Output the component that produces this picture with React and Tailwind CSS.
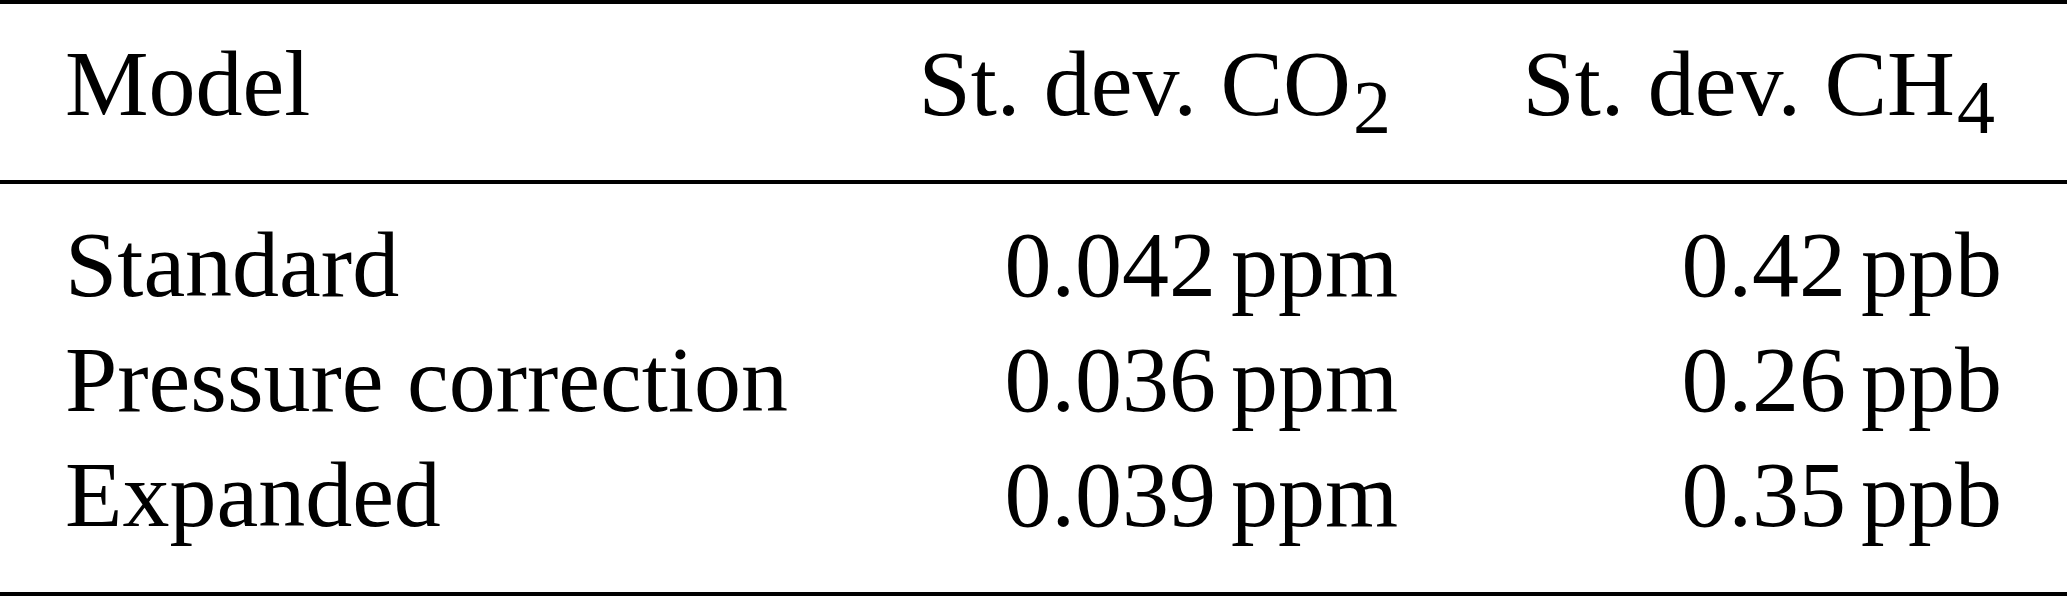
import React from "react";

const rows = [
  { model: "Standard", co2: "0.042", ch4: "0.42" },
  { model: "Pressure correction", co2: "0.036", ch4: "0.26" },
  { model: "Expanded", co2: "0.039", ch4: "0.35" },
];

function Sub({ children }) {
  return (
    <span className="relative top-[18px] ml-[2px] mr-[7px] text-[76px] leading-none">
      {children}
    </span>
  );
}

export default function App() {
  return (
    <div className="w-[2067px] h-[596px] bg-white text-black font-['Liberation_Serif','Times_New_Roman',serif] text-[94px] leading-[115px] whitespace-nowrap">
      <div className="h-[4px] bg-black" />
      <div className="grid grid-cols-[833px_500px_604px] px-[65px] pt-[22px] pb-[39px]">
        <div>Model</div>
        <div className="text-right">
          St. dev. CO<Sub>2</Sub>
        </div>
        <div className="text-right">
          St. dev. CH<Sub>4</Sub>
        </div>
      </div>
      <div className="h-[4px] bg-black" />
      <div className="grid grid-cols-[833px_500px_604px] px-[65px] pt-[23px] pb-[40px]">
        {rows.map((r) => (
          <React.Fragment key={r.model}>
            <div>{r.model}</div>
            <div className="text-right">
              {r.co2}
              <span className="ml-[15px]">ppm</span>
            </div>
            <div className="text-right">
              {r.ch4}
              <span className="ml-[15px]">ppb</span>
            </div>
          </React.Fragment>
        ))}
      </div>
      <div className="h-[4px] bg-black" />
    </div>
  );
}
